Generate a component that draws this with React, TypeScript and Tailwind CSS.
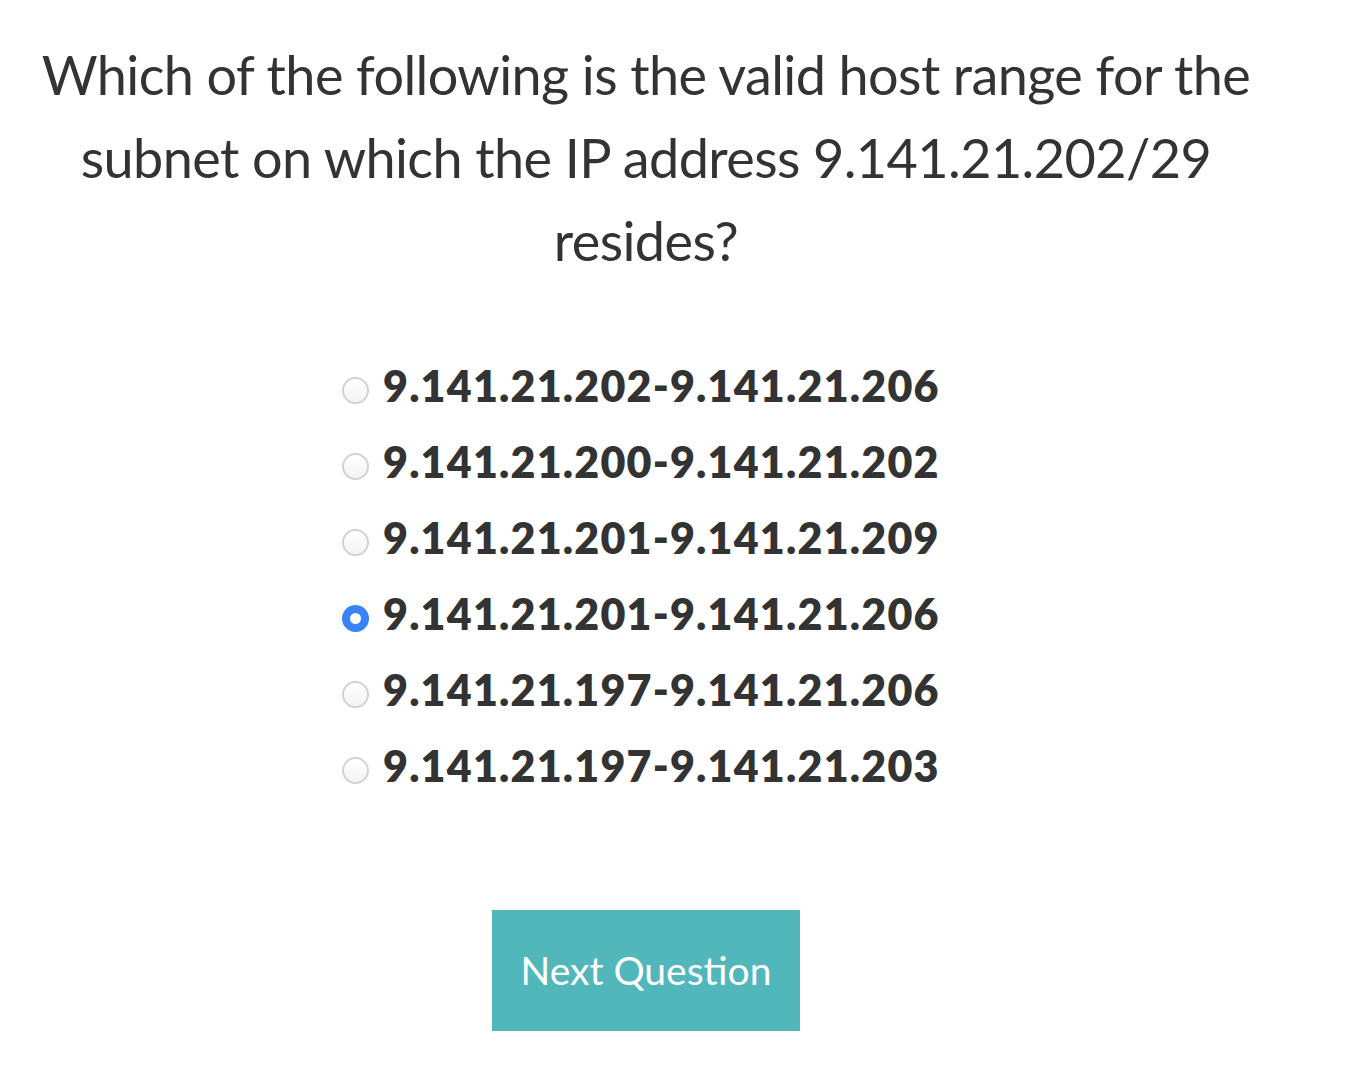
import React, { useState } from "react";

const options = [
  "9.141.21.202-9.141.21.206",
  "9.141.21.200-9.141.21.202",
  "9.141.21.201-9.141.21.209",
  "9.141.21.201-9.141.21.206",
  "9.141.21.197-9.141.21.206",
  "9.141.21.197-9.141.21.203",
];

const font = { fontFamily: "Futura, 'Lato', 'Noto Sans', sans-serif" };

export default function App() {
  const [picked, setPicked] = useState(3);

  return (
    <div className="min-h-screen bg-white text-[#333333]" style={font}>
      <div className="w-[1292px] pt-[33px] text-center">
        <h1 className="text-[54px] font-normal leading-[83px] tracking-[-0.6px]">
          Which of the following is the valid host range for the
          <br />
          subnet on which the IP address 9.141.21.202/29
          <br />
          resides?
        </h1>
      </div>

      {/* Answers */}
      <div className="mt-[66px] ml-[342px] flex flex-col">
        {options.map((opt, i) => (
          <label
            key={i}
            className="flex h-[76px] cursor-pointer items-center gap-[14px]"
            onClick={() => setPicked(i)}
          >
            {picked === i ? (
              <span className="mt-[8px] flex h-[27px] w-[27px] items-center justify-center rounded-full bg-[#3a82f7]">
                <span className="h-[11px] w-[11px] rounded-full bg-white" />
              </span>
            ) : (
              <span className="mt-[8px] h-[27px] w-[27px] rounded-full border-2 border-[#d2d2d2] bg-gradient-to-b from-white to-[#f3f3f3]" />
            )}
            <span className="text-[43px] font-extrabold tracking-[1.2px]">{opt}</span>
          </label>
        ))}
      </div>

      <div className="mt-[106px] flex w-[1292px] justify-center">
        <button className="h-[121px] w-[308px] bg-[#52b7ba] text-[39px] text-white">
          Next Question
        </button>
      </div>
    </div>
  );
}
